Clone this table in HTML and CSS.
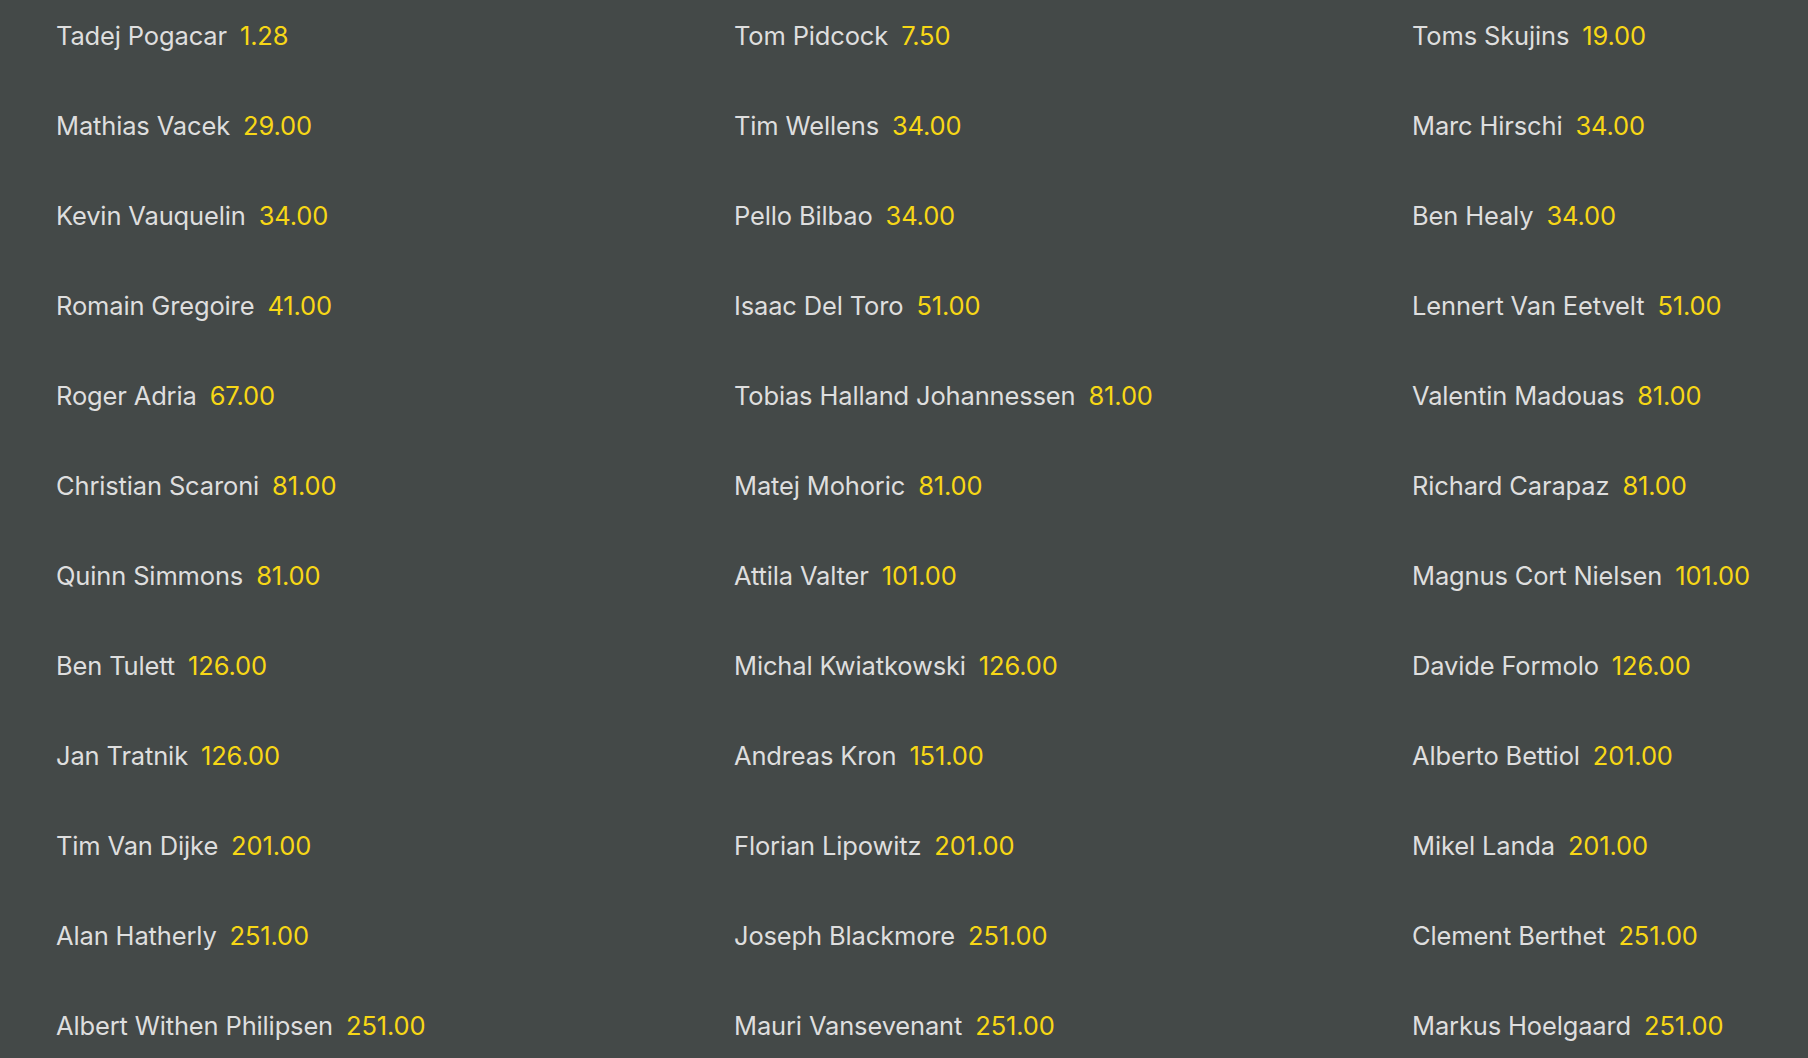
FILE: index.html
```html
<!DOCTYPE html>
<html>
<head>
<meta charset="utf-8">
<link rel="stylesheet" href="styles.css">
</head>
<body>
<div class="grid">
  <div class="row"><span class="name">Tadej Pogacar</span><span class="odds">1.28</span></div>
  <div class="row"><span class="name">Tom Pidcock</span><span class="odds">7.50</span></div>
  <div class="row"><span class="name">Toms Skujins</span><span class="odds">19.00</span></div>
  <div class="row"><span class="name">Mathias Vacek</span><span class="odds">29.00</span></div>
  <div class="row"><span class="name">Tim Wellens</span><span class="odds">34.00</span></div>
  <div class="row"><span class="name">Marc Hirschi</span><span class="odds">34.00</span></div>
  <div class="row"><span class="name">Kevin Vauquelin</span><span class="odds">34.00</span></div>
  <div class="row"><span class="name">Pello Bilbao</span><span class="odds">34.00</span></div>
  <div class="row"><span class="name">Ben Healy</span><span class="odds">34.00</span></div>
  <div class="row"><span class="name">Romain Gregoire</span><span class="odds">41.00</span></div>
  <div class="row"><span class="name">Isaac Del Toro</span><span class="odds">51.00</span></div>
  <div class="row"><span class="name">Lennert Van Eetvelt</span><span class="odds">51.00</span></div>
  <div class="row"><span class="name">Roger Adria</span><span class="odds">67.00</span></div>
  <div class="row"><span class="name">Tobias Halland Johannessen</span><span class="odds">81.00</span></div>
  <div class="row"><span class="name">Valentin Madouas</span><span class="odds">81.00</span></div>
  <div class="row"><span class="name">Christian Scaroni</span><span class="odds">81.00</span></div>
  <div class="row"><span class="name">Matej Mohoric</span><span class="odds">81.00</span></div>
  <div class="row"><span class="name">Richard Carapaz</span><span class="odds">81.00</span></div>
  <div class="row"><span class="name">Quinn Simmons</span><span class="odds">81.00</span></div>
  <div class="row"><span class="name">Attila Valter</span><span class="odds">101.00</span></div>
  <div class="row"><span class="name">Magnus Cort Nielsen</span><span class="odds">101.00</span></div>
  <div class="row"><span class="name">Ben Tulett</span><span class="odds">126.00</span></div>
  <div class="row"><span class="name">Michal Kwiatkowski</span><span class="odds">126.00</span></div>
  <div class="row"><span class="name">Davide Formolo</span><span class="odds">126.00</span></div>
  <div class="row"><span class="name">Jan Tratnik</span><span class="odds">126.00</span></div>
  <div class="row"><span class="name">Andreas Kron</span><span class="odds">151.00</span></div>
  <div class="row"><span class="name">Alberto Bettiol</span><span class="odds">201.00</span></div>
  <div class="row"><span class="name">Tim Van Dijke</span><span class="odds">201.00</span></div>
  <div class="row"><span class="name">Florian Lipowitz</span><span class="odds">201.00</span></div>
  <div class="row"><span class="name">Mikel Landa</span><span class="odds">201.00</span></div>
  <div class="row"><span class="name">Alan Hatherly</span><span class="odds">251.00</span></div>
  <div class="row"><span class="name">Joseph Blackmore</span><span class="odds">251.00</span></div>
  <div class="row"><span class="name">Clement Berthet</span><span class="odds">251.00</span></div>
  <div class="row"><span class="name">Albert Withen Philipsen</span><span class="odds">251.00</span></div>
  <div class="row"><span class="name">Mauri Vansevenant</span><span class="odds">251.00</span></div>
  <div class="row"><span class="name">Markus Hoelgaard</span><span class="odds">251.00</span></div>
</div>
</body>
</html>
```

FILE: styles.css
```css
html, body {
  margin: 0;
  padding: 0;
  background: #444948;
  overflow: hidden;
}
body {
  width: 1808px;
  height: 1058px;
  font-family: "Inter", "Noto Sans", sans-serif;
  font-size: 25.5px;
  letter-spacing: -0.15px;
}
.grid {
  display: grid;
  grid-template-columns: repeat(3, 678px);
  grid-auto-rows: 90px;
  padding-left: 56px;
  padding-top: 20px;
  width: 2034px;
}
.row {
  display: flex;
  align-items: baseline;
  gap: 13px;
  line-height: 32px;
  white-space: nowrap;
}
.name {
  color: #dedede;
}
.odds {
  color: #f7d716;
}
```
